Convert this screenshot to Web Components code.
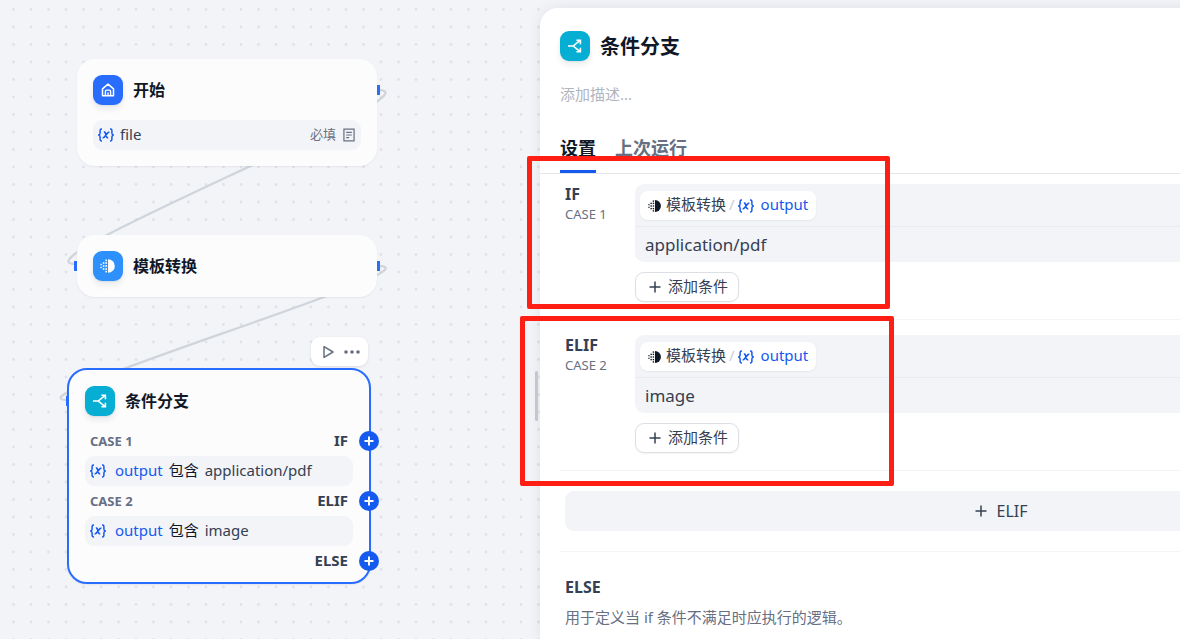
<!DOCTYPE html>
<html lang="zh-CN">
<head>
<meta charset="utf-8">
<title>条件分支</title>
<style>
html, body { margin: 0; height: 100%; overflow: hidden; }
body { font-family: "Noto Sans", "Noto Sans CJK SC", sans-serif; color: #354052; background: #f2f4f8; }
</style>
</head>
<body>
<wf-app></wf-app>
<script>
const define = (name, html, init) => {
  const tpl = document.createElement('template');
  tpl.innerHTML = html;
  customElements.define(name, class extends HTMLElement {
    static observedAttributes = ['name'];
    constructor() {
      super();
      this.attachShadow({ mode: 'open' }).append(tpl.content.cloneNode(true));
    }
    connectedCallback() { if (init) init(this, this.shadowRoot); }
    attributeChangedCallback() { if (init) init(this, this.shadowRoot); }
  });
};

/* Dotted half-disc used by the template-transform block */
const dot = (x, y, s) => `<rect x="${x}" y="${y}" width="${s}" height="${s}"/>`;
const halfDisc = `<path d="M8 1.2a6.8 6.8 0 0 1 0 13.6z" fill="currentColor"/><g fill="currentColor">`
  + [1.6, 4.2, 7.2, 10.2, 12.8].map(y => dot(5.4, y, 1.6)).join('')
  + [4.2, 7.2, 10.2].map(y => dot(2.8, y, 1.6)).join('')
  + dot(.4, 5.8, 1.4) + dot(.4, 8.8, 1.4) + '</g>';
const line = (d, w = 1.5, extra = '') => `<path d="${d}" fill="none" stroke="currentColor" stroke-width="${w}" ${extra}/>`;
const icons = {
  home: line('M2.5 6.8 8 2.2l5.5 4.6v6.9h-11z', 1.5, 'stroke-linejoin="round"') + line('M5.4 13.5V9.4q0-1.3 1.3-1.3h2.6q1.3 0 1.3 1.3v4.1', 1.4) + line('M8 10.4v3.2', 1.4),
  template: halfDisc,
  branch: line('M1 8h5.2M6.2 8l6.3-5.2M6.2 8l6.3 5.2M9.4 2.2h4v4M9.4 13.8h4v-4', 1.6),
  variable: line('M4 2h-.5Q2.1 2 2.1 3.4v2.5Q2.1 7.6.6 8q1.5.4 1.5 2.1v2.5q0 1.4 1.4 1.4H4M12 2h.5q1.4 0 1.4 1.4v2.5q0 1.7 1.5 2.1-1.5.4-1.5 2.1v2.5q0 1.4-1.4 1.4H12', 1.5)
    + line('M5.9 5.3q1-.4 1.4.6L8.7 10q.4 1 1.5.6M11.4 5.3q-1.2-.2-2 .9l-2.8 3.6q-.8 1.1-2 .9', 1.6),
  doc: line('M2.2 1.4h11.6v13.2H2.2z', 1.4) + line('M4.8 5h6.4M4.8 8h6.4M4.8 11h3.4', 1.4),
  plus: line('M8 2.5v11M2.5 8h11', 1.5),
  bold: line('M8 2v12M2 8h12', 2.6),
  play: line('M4 2.6v10.8L13 8z', 1.5, 'stroke-linejoin="round"'),
  more: '<g fill="currentColor"><circle cx="2" cy="8" r="1.8"/><circle cx="8" cy="8" r="1.8"/><circle cx="14" cy="8" r="1.8"/></g>'
};

define('wf-icon', `<style>
:host { display: inline-block; flex: none; width: 16px; height: 16px; }
svg { display: block; width: 100%; height: 100%; }
</style><svg viewBox="0 0 16 16" aria-hidden="true"></svg>`, (el, root) => {
  root.querySelector('svg').innerHTML = icons[el.getAttribute('name')] || '';
});

define('wf-badge', `<style>
:host { display: flex; flex: none; align-items: center; justify-content: center; width: 30px; height: 30px; border-radius: 9px; color: #fff; background: #296dff; box-shadow: 0 4px 6px rgba(16,24,40,.08), 0 1px 2px rgba(16,24,40,.06); }
:host([name=template]) { background: #2e90fa; }
:host([name=branch]) { background: #06aed4; }
</style><wf-icon></wf-icon>`, (el, root) => {
  root.querySelector('wf-icon').setAttribute('name', el.getAttribute('name'));
});

define('wf-node', `<style>
:host { position: absolute; box-sizing: border-box; width: 300px; padding: 16px; border-radius: 18px; background: #fcfcfd; box-shadow: 0 1px 2px rgba(16,24,40,.06); }
:host([selected]) { width: 304px; padding-bottom: 6px; border: 2px solid #296dff; border-radius: 20px; }
header { display: flex; align-items: center; gap: 10px; }
h2 { margin: 0; font-size: 16px; line-height: 24px; font-weight: 700; color: #101828; }
.port { position: absolute; top: 26px; width: 3px; height: 10px; background: #296dff; }
.in { left: -3px; } .out { right: -3px; }
:host([ports=in]) .out, :host([ports=out]) .in { display: none; }
</style><header><wf-badge></wf-badge><h2></h2></header><slot></slot><i class="port in"></i><i class="port out"></i>`, (el, root) => {
  root.querySelector('wf-badge').setAttribute('name', el.getAttribute('icon'));
  root.querySelector('h2').textContent = el.getAttribute('label');
});

define('wf-field', `<style>
:host { display: flex; align-items: center; box-sizing: border-box; height: 30px; padding: 0 5px; border-radius: 9px; background: #f2f4f7; font-size: 15px; line-height: 20px; gap: 6px; }
wf-icon { color: #155aef; }
::slotted(:not(wf-icon)) { padding-bottom: 2px; }
</style><wf-icon name="variable"></wf-icon><slot></slot>`);

define('wf-branch', `<style>
:host { position: relative; display: flex; align-items: center; justify-content: space-between; height: 30px; padding: 0 5px; font-weight: 700; font-size: 15px; line-height: 20px; }
.case { font-size: 13px; color: #676f83; }
.name { padding-bottom: 2px; }
button { position: absolute; right: -26px; width: 20px; height: 20px; padding: 0; display: grid; place-items: center; border: 0; border-radius: 50%; background: #155aef; color: #fff; }
wf-icon { width: 12px; height: 12px; }
</style><span class="case"></span><span class="name"></span><button aria-label="添加节点"><wf-icon name="bold"></wf-icon></button>`, (el, root) => {
  root.querySelector('.case').textContent = el.getAttribute('case') || '';
  root.querySelector('.name').textContent = el.getAttribute('name');
});

define('wf-canvas', `<style>
:host { display: block; position: relative; overflow: hidden; }
.back { position: absolute; inset: 0; width: 100%; height: 100%; }
.start { left: 77px; top: 59px; }
.template { left: 77px; top: 235px; }
.condition { left: 67px; top: 368px; }
.start wf-field { margin-top: 15px; }
.lead { flex: 1; }
.hint { font-size: 13px; color: #676f83; }
.doc { width: 14px; height: 14px; color: #676f83; }
.cases { margin-top: 10px; }
.cases b { font-weight: 400; color: #155aef; margin-left: 3px; }
.cases i { font-style: normal; color: #101828; }
.tools { position: absolute; left: 311px; top: 337px; display: flex; align-items: center; justify-content: center; gap: 8px; width: 57px; height: 29px; border-radius: 9px; background: #fff; box-shadow: 0 1px 3px rgba(16,24,40,.1); }
.tools button { display: grid; place-items: center; width: 16px; height: 20px; padding: 0; border: 0; background: none; color: #676f83; }
.tools wf-icon { width: 16px; height: 16px; }
</style>
<svg class="back" aria-hidden="true">
<defs><pattern id="dots" width="35" height="35" patternUnits="userSpaceOnUse" x="5" y="1"><g fill="#e0e2e8"><circle cx="8.5" cy="8.5" r="1.4"/><circle cx="26" cy="8.5" r="1.4"/><circle cx="8.5" cy="26" r="1.4"/><circle cx="26" cy="26" r="1.4"/></g></pattern></defs>
<rect width="100%" height="100%" fill="url(#dots)"/>
<g fill="none" stroke="#d0d5dc" stroke-width="2.3"><path d="M378 90C448 90 6 264 76 264"/><path d="M378 266C450 266-2 400 68 400"/></g>
</svg>
<wf-node class="start" icon="home" label="开始" ports="out"><wf-field><span class="lead">file</span><span class="hint">必填</span><wf-icon class="doc" name="doc"></wf-icon></wf-field></wf-node>
<wf-node class="template" icon="template" label="模板转换"></wf-node>
<wf-node class="condition" icon="branch" label="条件分支" ports="in" selected>
<div class="cases">
<wf-branch case="CASE 1" name="IF"></wf-branch>
<wf-field><b>output</b><i>包含</i><span>application/pdf</span></wf-field>
<wf-branch case="CASE 2" name="ELIF"></wf-branch>
<wf-field><b>output</b><i>包含</i><span>image</span></wf-field>
<wf-branch name="ELSE"></wf-branch>
</div></wf-node>
<div class="tools"><button aria-label="运行"><wf-icon name="play"></wf-icon></button><button aria-label="更多"><wf-icon name="more"></wf-icon></button></div>`);

define('wf-case', `<style>
:host { display: grid; grid-template-columns: 70px 1fr; margin-left: 20px; padding: 15px 20px 17px 5px; border-bottom: 1px solid #f2f4f7; }
h3 { margin: 0; font-size: 16px; line-height: 20px; font-weight: 700; }
small { display: block; font-size: 13px; line-height: 20px; color: #676f83; }
.box { border-radius: 9px; background: #f2f4f7; height: 78px; }
.top { box-sizing: border-box; height: 43px; padding: 7px 5px; border-bottom: 1px solid #e9ebf0; display: flex; }
.pill { display: flex; align-items: center; height: 29px; padding: 0 8px; border-radius: 8px; background: #fff; font-size: 15px; line-height: 20px; box-shadow: 0 1px 2px rgba(16,24,40,.06); }
.pill span, .pill b, .add span { padding-bottom: 3px; }
.pill .src { width: 14px; height: 14px; margin-right: 4px; color: #101828; }
.pill .slash { margin: 0 3px; color: #c8ceda; }
.pill .var { color: #155aef; margin-right: 7px; }
.pill b { font-weight: 400; color: #155aef; }
input { display: block; box-sizing: border-box; width: 100%; height: 35px; padding: 0 10px; border: 0; background: none; font: inherit; font-size: 17px; color: inherit; outline: none; }
.add { display: flex; align-items: center; gap: 5px; box-sizing: border-box; height: 30px; margin-top: 10px; padding: 0 10px 0 11px; border: 1px solid #dcdfe4; border-radius: 9px; background: #fff; font: inherit; font-size: 15px; line-height: 20px; color: inherit; box-shadow: 0 1px 2px rgba(16,24,40,.05); }
</style>
<div><h3></h3><small></small></div>
<div><div class="box"><div class="top"><span class="pill"><wf-icon class="src" name="template"></wf-icon><span>模板转换</span><span class="slash">/</span><wf-icon class="var" name="variable"></wf-icon><b>output</b></span></div>
<input aria-label="条件值"></div>
<button class="add"><wf-icon name="plus"></wf-icon><span>添加条件</span></button></div>`, (el, root) => {
  root.querySelector('h3').textContent = el.getAttribute('name');
  root.querySelector('small').textContent = el.getAttribute('case');
  root.querySelector('input').value = el.getAttribute('value');
});

define('wf-panel', `<style>
:host { display: block; box-sizing: border-box; position: relative; background: #fff; border-radius: 18px 0 0 0; box-shadow: 0 0 14px rgba(16,24,40,.08); }
header { display: flex; align-items: center; gap: 10px; padding: 23px 20px 0; }
h1 { margin: 0; padding-top: 2px; font-size: 20px; line-height: 28px; font-weight: 700; color: #101828; }
.desc { display: block; box-sizing: border-box; width: 100%; height: 24px; margin: 21px 0 0; padding: 0 20px; border: 0; background: none; font: inherit; font-size: 15px; outline: none; }
.desc::placeholder { color: #b0b5c0; opacity: 1; }
nav { display: flex; gap: 19px; margin-top: 28px; padding: 0 20px; border-bottom: 1px solid #e4e6ea; }
nav button { box-sizing: border-box; height: 39px; padding: 0 0 9px; border: 0; border-bottom: 3px solid transparent; background: none; font: inherit; font-size: 18px; line-height: 24px; font-weight: 700; color: #676f83; }
nav .on { color: #101828; border-color: #155aef; }
.first { padding-top: 10px; }
.elif { margin-left: 20px; padding: 20px 20px 20px 5px; border-bottom: 1px solid #f2f4f7; }
.elif button { display: flex; align-items: center; justify-content: center; gap: 7px; width: 100%; height: 40px; border: 0; border-radius: 9px; background: #f2f4f7; font: inherit; font-size: 16px; color: inherit; }
section { padding: 25px; }
h3 { margin: 0; font-size: 16px; line-height: 20px; font-weight: 700; }
p { margin: 9px 0 0; font-size: 15px; line-height: 22px; color: #676f83; }
.grip { position: absolute; left: -5px; top: 363px; width: 3px; height: 50px; border-radius: 2px; background: #c3c7d0; }
</style>
<i class="grip"></i>
<header><wf-badge name="branch"></wf-badge><h1>条件分支</h1></header>
<input class="desc" aria-label="描述" placeholder="添加描述...">
<nav><button class="on">设置</button><button>上次运行</button></nav>
<wf-case class="first" name="IF" case="CASE 1" value="application/pdf"></wf-case>
<wf-case name="ELIF" case="CASE 2" value="image"></wf-case>
<div class="elif"><button><wf-icon name="plus"></wf-icon>ELIF</button></div>
<section><h3>ELSE</h3><p>用于定义当 if 条件不满足时应执行的逻辑。</p></section>`);

define('wf-app', `<style>
:host { display: flex; position: relative; height: 100%; overflow: hidden; }
wf-canvas { flex: 0 0 540px; }
wf-panel { flex: 1 0 916px; margin-top: 8px; }
.mark { position: absolute; box-sizing: border-box; border: 5px solid #ff1e14; border-radius: 2px; pointer-events: none; }
.one { left: 527px; top: 156px; width: 363px; height: 153px; }
.two { left: 520px; top: 316px; width: 374px; height: 170px; }
</style><wf-canvas></wf-canvas><wf-panel></wf-panel><div class="mark one"></div><div class="mark two"></div>`);
</script>
</body>
</html>
